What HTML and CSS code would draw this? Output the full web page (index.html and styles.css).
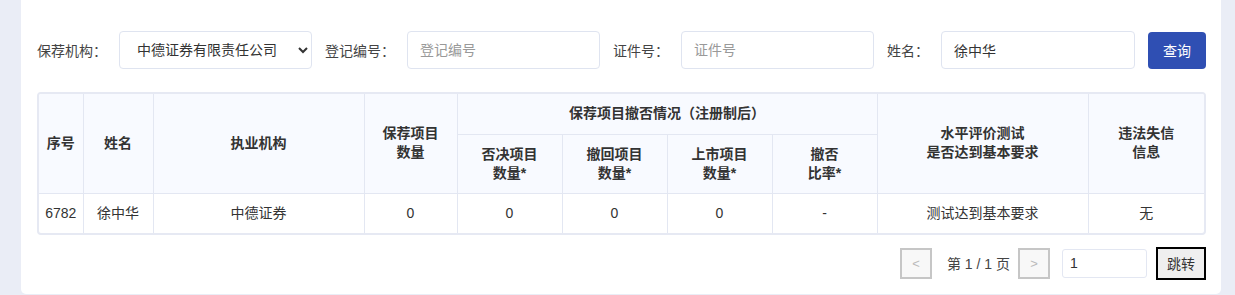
FILE: index.html
```html
<!DOCTYPE html>
<html lang="zh-CN">
    <head>
        <meta charset="utf-8">
        <title>保荐代表人查询</title>
        <link rel="stylesheet" href="styles.css">
    </head>
    <body>
        <div class="card">
            <form class="filters">
                <label for="org">保荐机构：</label>
                <select id="org" class="field">
                    <option>中德证券有限责任公司</option>
                </select>
                <label for="reg">登记编号：</label>
                <input type="text" id="reg" class="field" placeholder="登记编号">
                <label for="cert">证件号：</label>
                <input type="text" id="cert" class="field" placeholder="证件号">
                <label for="name">姓名：</label>
                <input type="text" id="name" class="field" placeholder="姓名" value="徐中华">
                <button type="button" class="search">查询</button>
            </form>

            <div class="table-wrap">
                <table>
                    <colgroup>
                        <col style="width: 44px">
                        <col style="width: 70px">
                        <col style="width: 211px">
                        <col style="width: 93px">
                        <col style="width: 105px">
                        <col style="width: 105px">
                        <col style="width: 105px">
                        <col style="width: 105px">
                        <col style="width: 211px">
                        <col style="width: 116px">
                    </colgroup>
                    <thead>
                        <tr class="top">
                            <th rowspan="2">序号</th>
                            <th rowspan="2">姓名</th>
                            <th rowspan="2">执业机构</th>
                            <th rowspan="2">保荐项目<br>数量</th>
                            <th colspan="4">保荐项目撤否情况（注册制后）</th>
                            <th rowspan="2">水平评价测试<br>是否达到基本要求</th>
                            <th rowspan="2">违法失信<br>信息</th>
                        </tr>
                        <tr class="sub">
                            <th>否决项目<br>数量*</th>
                            <th>撤回项目<br>数量*</th>
                            <th>上市项目<br>数量*</th>
                            <th>撤否<br>比率*</th>
                        </tr>
                    </thead>
                    <tbody>
                        <tr>
                            <td>6782</td>
                            <td>徐中华</td>
                            <td>中德证券</td>
                            <td>0</td>
                            <td>0</td>
                            <td>0</td>
                            <td>0</td>
                            <td>-</td>
                            <td>测试达到基本要求</td>
                            <td>无</td>
                        </tr>
                    </tbody>
                </table>
            </div>

            <div class="pager">
                <button type="button" class="page-btn" disabled>&lt;</button>
                <span class="page-info">第 1 / 1 页</span>
                <button type="button" class="page-btn" disabled>&gt;</button>
                <input type="text" class="page-input" value="1">
                <button type="button" class="jump">跳转</button>
            </div>
        </div>
    </body>
</html>
```

FILE: styles.css
```css
html {
    font-family: "Liberation Sans", "Noto Sans CJK SC", sans-serif;
    background-color: #eaedf6;
    text-spacing-trim: space-all;
}

body {
    margin: 0;
    font-size: 14px;
    color: #333;
}

.card {
    background: #fff;
    width: 1200px;
    height: 294px;
    margin-left: 21px;
    border-radius: 0 0 5px 5px;
    padding: 31px 15px 0 16px;
    box-sizing: border-box;
}

.filters {
    display: flex;
    align-items: center;
    height: 38px;
}

.filters label {
    color: #444;
    margin-right: 12px;
    white-space: nowrap;
}

.field {
    width: 193px;
    height: 38px;
    box-sizing: border-box;
    border: 1px solid #dfe4f0;
    border-radius: 4px;
    background: #fff;
    font-family: inherit;
    font-size: 14px;
    color: #333;
    padding: 0 12px;
    margin-right: 13px;
    outline: none;
}

select.field {
    padding-left: 13px;
}

#name {
    width: 194px;
}

.field::placeholder {
    color: #999;
}

.search {
    width: 58px;
    height: 37px;
    border: none;
    border-radius: 4px;
    background: #2f4fb3;
    color: #fff;
    font-family: inherit;
    font-size: 14px;
}

.table-wrap {
    margin-top: 23px;
    width: 1169px;
    border: 2px solid #e6e9f3;
    border-radius: 4px;
    box-sizing: border-box;
    overflow: hidden;
}

table {
    width: 100%;
    border-collapse: collapse;
    table-layout: fixed;
}

th, td {
    border: 1px solid #e3e7f2;
    text-align: center;
    padding: 0;
    line-height: 19px;
}

tr:first-child th, tr:first-child td {
    border-top: none;
}

th:first-child, td:first-child {
    border-left: none;
}

.top th:last-child, td:last-child {
    border-right: none;
}

tbody tr:last-child td {
    border-bottom: none;
}

th {
    background: #f8faff;
    font-weight: bold;
    color: #333;
}

.top {
    height: 40px;
}

.sub {
    height: 59px;
}

td {
    height: 39px;
    color: #333;
}

.pager {
    display: flex;
    align-items: center;
    justify-content: flex-end;
    margin-top: 12px;
    width: 1169px;
}

.page-btn {
    width: 32px;
    height: 31px;
    border: 2px solid #c6c6c6;
    background: #f8f8f8;
    color: #bbb;
    font-size: 13px;
    padding: 0;
}

.page-info {
    margin: 0 8px 0 15px;
    color: #444;
}

.page-input {
    width: 85px;
    height: 29px;
    box-sizing: border-box;
    border: 1px solid #e3e7f2;
    border-radius: 3px;
    margin-left: 12px;
    padding: 0 7px;
    font-family: inherit;
    font-size: 14px;
    color: #333;
    outline: none;
}

.jump {
    width: 50px;
    height: 33px;
    margin-left: 9px;
    border: 2px solid #000;
    background: #efefef;
    color: #333;
    font-family: inherit;
    font-size: 14px;
    padding: 0;
}
```
